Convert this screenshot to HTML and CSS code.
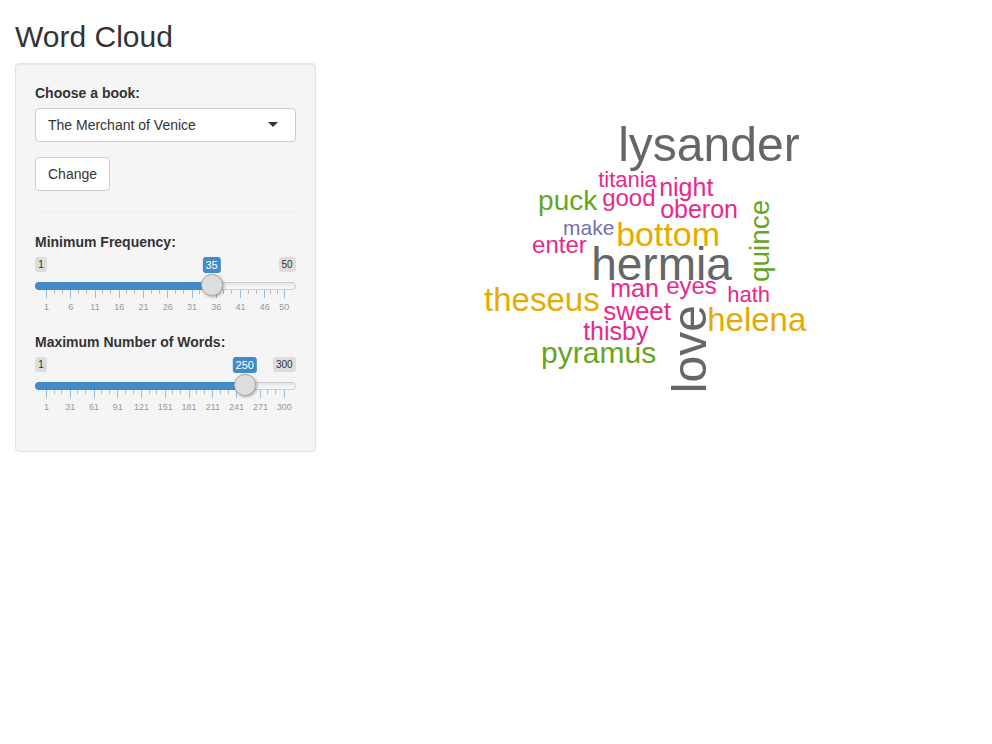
FILE: index.html
```html
<!DOCTYPE html>
<html lang="en">
<head>
<meta charset="utf-8">
<meta name="viewport" content="width=device-width, initial-scale=1">
<title>Word Cloud</title>
<link rel="stylesheet" href="styles.css">
</head>
<body>
<div class="page">
  <h1 class="title">Word Cloud</h1>
  <div class="layout">
    <form class="well">
      <div class="field">
        <label for="book">Choose a book:</label>
        <div class="select-wrap">
          <select id="book">
            <option>A Mid Summer Night's Dream</option>
            <option selected>The Merchant of Venice</option>
            <option>Romeo and Juliet</option>
          </select>
        </div>
      </div>
      <button class="btn" type="button">Change</button>
      <hr>
      <div class="field">
        <label for="freq">Minimum Frequency:</label>
        <div class="slider" style="--ratio: 0.6939">
          <div class="limits"><span>1</span><span>50</span></div>
          <output class="value" for="freq">35</output>
          <input id="freq" type="range" min="1" max="50" value="35">
          <ul class="ticks">
            <li class="wide"><span>1</span></li>
            <li class="wide"><span>6</span></li>
            <li class="wide"><span>11</span></li>
            <li class="wide"><span>16</span></li>
            <li class="wide"><span>21</span></li>
            <li class="wide"><span>26</span></li>
            <li class="wide"><span>31</span></li>
            <li class="wide"><span>36</span></li>
            <li class="wide"><span>41</span></li>
            <li class="narrow"><span>46</span></li>
            <li class="last"><span>50</span></li>
          </ul>
        </div>
      </div>
      <div class="field">
        <label for="max">Maximum Number of Words:</label>
        <div class="slider" style="--ratio: 0.8328">
          <div class="limits"><span>1</span><span>300</span></div>
          <output class="value" for="max">250</output>
          <input id="max" type="range" min="1" max="300" value="250">
          <ul class="ticks">
            <li class="wide"><span>1</span></li>
            <li class="wide"><span>31</span></li>
            <li class="wide"><span>61</span></li>
            <li class="wide"><span>91</span></li>
            <li class="wide"><span>121</span></li>
            <li class="wide"><span>151</span></li>
            <li class="wide"><span>181</span></li>
            <li class="wide"><span>211</span></li>
            <li class="wide"><span>241</span></li>
            <li class="wide"><span>271</span></li>
            <li class="last"><span>300</span></li>
          </ul>
        </div>
      </div>
    </form>
    <main class="plot">
      <svg class="cloud" viewBox="0 0 631 400" role="img" aria-label="Word cloud">
        <g class="gray">
          <text x="272" y="98" font-size="48">lysander</text>
          <text x="245" y="217" font-size="46">hermia</text>
          <text transform="translate(360 330) rotate(-90)" font-size="48">love</text>
        </g>
        <g class="gold">
          <text x="138" y="248" font-size="33">theseus</text>
          <text x="270" y="183" font-size="34">bottom</text>
          <text x="361" y="268" font-size="33">helena</text>
        </g>
        <g class="green">
          <text x="195" y="300" font-size="30">pyramus</text>
          <text x="192" y="147" font-size="28">puck</text>
          <text transform="translate(423 219) rotate(-90)" font-size="28">quince</text>
        </g>
        <g class="pink">
          <text x="252" y="124" font-size="22">titania</text>
          <text x="256" y="143" font-size="24">good</text>
          <text x="313" y="133" font-size="25">night</text>
          <text x="314" y="155" font-size="25">oberon</text>
          <text x="186" y="190" font-size="24">enter</text>
          <text x="264" y="234" font-size="25">man</text>
          <text x="320" y="231" font-size="24">eyes</text>
          <text x="381" y="239" font-size="22">hath</text>
          <text x="257" y="257" font-size="26">sweet</text>
          <text x="237" y="277" font-size="25">thisby</text>
        </g>
        <g class="purple">
          <text x="217" y="172" font-size="21">make</text>
        </g>
      </svg>
    </main>
  </div>
</div>
</body>
</html>
```
FILE: styles.css
```css
*,
*::before,
*::after { box-sizing: border-box; }

body {
  margin: 0;
  background: #fff;
  color: #333;
  font-family: "Liberation Sans", Arial, sans-serif;
  font-size: 14px;
  line-height: 20px;
}

.page { padding: 20px 15px; }

.title {
  margin: 0 0 10px;
  font-size: 30px;
  font-weight: 400;
  line-height: 33px;
}

.layout {
  display: grid;
  grid-template-columns: minmax(0, 10fr) minmax(0, 21fr);
  gap: 30px;
  align-items: start;
}

.well {
  padding: 19px;
  border: 1px solid #e3e3e3;
  border-radius: 4px;
  background: #f5f5f5;
  box-shadow: inset 0 1px 1px rgba(0, 0, 0, 0.05);
}

.field { margin-bottom: 15px; }

label {
  display: block;
  margin-bottom: 5px;
  font-weight: 700;
}

.select-wrap { position: relative; }

.select-wrap::after {
  content: "";
  position: absolute;
  top: 14px;
  right: 18px;
  border: 5px solid transparent;
  border-top-color: #333;
  border-bottom: 0;
  pointer-events: none;
}

select,
.btn {
  display: block;
  height: 34px;
  padding: 0 12px;
  border: 1px solid #ccc;
  border-radius: 4px;
  background: #fff;
  color: #333;
  font: inherit;
}

select {
  width: 100%;
  appearance: none;
}

hr {
  height: 1px;
  margin: 20px 0;
  border: 0;
  background: #eee;
}

.slider {
  position: relative;
  height: 60px;
  font-size: 10px;
  line-height: 13px;
}

/* Track and its filled part, drawn under the thumb */
.slider::before,
.slider::after {
  content: "";
  position: absolute;
  top: 25px;
  left: 0;
  height: 8px;
}

.slider::before {
  width: 100%;
  border: 1px solid #ccc;
  border-radius: 8px;
  background: linear-gradient(#e6e6e6, #fafafa);
}

.slider::after {
  width: calc(11px + (100% - 22px) * var(--ratio));
  border-radius: 8px 0 0 8px;
  background: #428bca;
}

.limits {
  display: flex;
  justify-content: space-between;
  height: 17px;
  align-items: flex-start;
}

.limits span {
  min-width: 12px;
  padding: 1px 3px;
  border-radius: 3px;
  background: #ddd;
  text-align: center;
}

.value {
  position: absolute;
  top: 0;
  left: calc(11px + (100% - 22px) * var(--ratio));
  padding: 1px 3px;
  border-radius: 3px;
  background: #428bca;
  color: #fff;
  font-size: 11px;
  line-height: 14px;
  transform: translateX(-50%);
}

input[type="range"] {
  display: block;
  position: relative;
  z-index: 1;
  width: 100%;
  height: 22px;
  margin: 0;
  background: none;
  appearance: none;
}

input[type="range"]::-webkit-slider-thumb {
  width: 22px;
  height: 22px;
  border: 1px solid #aaa;
  border-radius: 50%;
  background: #dedede;
  box-shadow: 1px 1px 3px rgba(0, 0, 0, 0.3);
  appearance: none;
}

.ticks {
  display: flex;
  margin: -6px 11px 0;
  padding: 0;
  list-style: none;
  color: #999;
  font-size: 9px;
}

.ticks li {
  display: flex;
  flex-direction: column;
  gap: 3px;
  background:
    linear-gradient(#bbb, #bbb) 33% 0 / 1px 4px no-repeat,
    linear-gradient(#bbb, #bbb) 67% 0 / 1px 4px no-repeat;
}

.ticks li::before {
  content: "";
  width: 1px;
  height: 8px;
  background: #98bfe0;
}

.ticks span {
  display: flex;
  justify-content: center;
  width: 1px;
}

.ticks .wide { flex: 5 1 0; }
.ticks .narrow { flex: 4 1 0; }
.ticks .last { width: 1px; background: none; }

.cloud {
  display: block;
  width: 100%;
  height: auto;
}

.gray { fill: #666; }
.gold { fill: #e6ab02; }
.green { fill: #66a61e; }
.pink { fill: #e7298a; }
.purple { fill: #7570b3; }
```
